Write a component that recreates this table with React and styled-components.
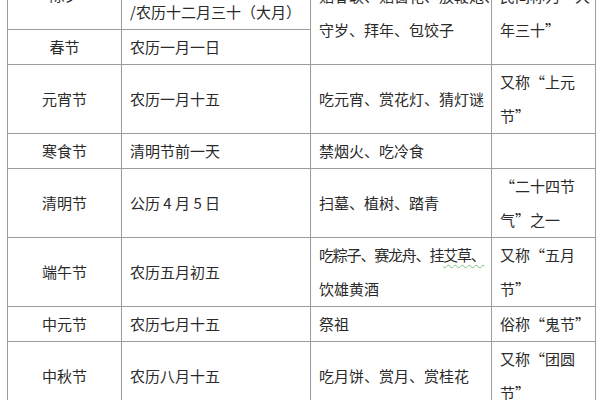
import React from 'react'
import styled, { createGlobalStyle } from 'styled-components'

const GlobalStyle = createGlobalStyle`
  html, body {
    margin: 0;
    padding: 0;
    background: #fff;
    overflow: hidden;
  }
  body {
    padding-left: 7px;
    font-family: "Noto Sans CJK SC", "Noto Sans", sans-serif;
  }
`

const festivals = [
  {
    name: '除夕',
    date: ['腊月二十九', '/农历十二月三十（大月）'],
    customs: ['贴春联、贴窗花、放鞭炮、', '守岁、拜年、包饺子'],
    note: ['民间称为“大', '年三十”'],
    span: 2,
  },
  { name: '春节', date: ['农历一月一日'] },
  {
    name: '元宵节',
    date: ['农历一月十五'],
    customs: ['吃元宵、赏花灯、猜灯谜'],
    note: ['又称“上元', '节”'],
  },
  { name: '寒食节', date: ['清明节前一天'], customs: ['禁烟火、吃冷食'], note: [] },
  {
    name: '清明节',
    date: ['公历 4 月 5 日'],
    customs: ['扫墓、植树、踏青'],
    note: ['“二十四节', '气”之一'],
  },
  {
    name: '端午节',
    date: ['农历五月初五'],
    customs: ['duanwu', '饮雄黄酒'],
    note: ['又称“五月', '节”'],
  },
  { name: '中元节', date: ['农历七月十五'], customs: ['祭祖'], note: ['俗称“鬼节”'] },
  {
    name: '中秋节',
    date: ['农历八月十五'],
    customs: ['吃月饼、赏月、赏桂花'],
    note: ['又称“团圆', '节”'],
  },
]

const Table = styled.table`
  margin-top: -40px;
  width: 589px;
  table-layout: fixed;
  border-collapse: collapse;
  color: #2a2a2a;
  font-size: 15px;
`

const Cell = styled.td`
  border: 1px solid #9c9c9c;
  padding: 0 8px;
  line-height: 34px;
  vertical-align: middle;
  white-space: nowrap;
  overflow: hidden;
  text-align: ${p => (p.$center ? 'center' : 'left')};
`

const Line = styled.div`
  letter-spacing: ${p => (p.$tight ? '-1.2px' : '0')};
`

const Squiggle = styled.span`
  text-decoration: underline wavy #7fbf7f;
  text-decoration-thickness: 1px;
  text-underline-offset: 3px;
`

const Lines = ({ items }) =>
  items.map((text, i) =>
    text === 'duanwu' ? (
      <Line key={i} $tight>
        吃粽子、赛龙舟、挂<Squiggle>艾草、</Squiggle>
      </Line>
    ) : (
      <Line key={i}>{text}</Line>
    )
  )

const App = () => {
  return (
    <>
      <GlobalStyle />
      <Table lang="zh-CN">
        <colgroup>
          <col style={{ width: 114 }} />
          <col style={{ width: 189 }} />
          <col style={{ width: 181 }} />
          <col style={{ width: 104 }} />
        </colgroup>
        <tbody>
          {festivals.map(f => (
            <tr key={f.name}>
              <Cell $center>{f.name}</Cell>
              <Cell>
                <Lines items={f.date} />
              </Cell>
              {f.customs && (
                <Cell rowSpan={f.span || 1}>
                  <Lines items={f.customs} />
                </Cell>
              )}
              {f.note && (
                <Cell rowSpan={f.span || 1}>
                  <Lines items={f.note} />
                </Cell>
              )}
            </tr>
          ))}
        </tbody>
      </Table>
    </>
  )
}

export default App
